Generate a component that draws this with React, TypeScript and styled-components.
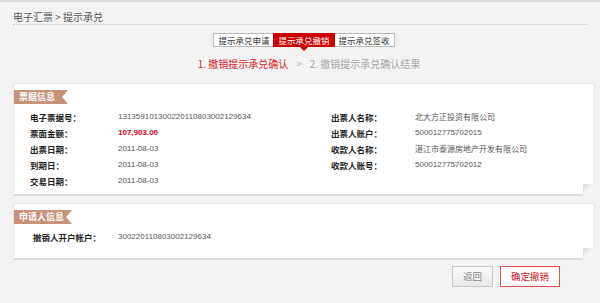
import React from "react";
import styled, { createGlobalStyle } from "styled-components";

const Global = createGlobalStyle`
  html, body { margin: 0; padding: 0; background: #f3f3f3; }
  body { font-family: "Liberation Sans", Arial, "Noto Sans CJK SC", sans-serif; color: #333; }
`;

const Page = styled.div`
  width: 600px;
  height: 303px;
  box-sizing: border-box;
  border-top: 2px solid #dcdcdc;
  padding: 0 5px 0 13px;
  background: #f3f3f3;
  overflow: hidden;
`;

const Breadcrumb = styled.div`
  height: 23px;
  box-sizing: border-box;
  padding-top: 9px;
  font-family: "Noto Sans CJK SC", sans-serif;
  font-size: 10px;
  line-height: 12px;
  color: #555;
  border-bottom: 1px dotted #c8c8c8;
  margin-right: 8px;
`;

const Tabs = styled.div`
  display: flex;
  justify-content: center;
  margin-top: 8px;
  padding-left: 1px;
`;

const Tab = styled.div<{ $active?: boolean }>`
  position: relative;
  height: 14px;
  box-sizing: border-box;
  padding: 0 4px;
  border: 1px solid ${(p) => (p.$active ? "#c80000" : "#b8b8b8")};
  margin-left: -1px;
  background: ${(p) => (p.$active ? "#cc0000" : "#fff")};
  color: ${(p) => (p.$active ? "#fff" : "#333")};
  font-family: "Noto Sans CJK SC", sans-serif;
  font-size: 8.5px;
  line-height: 12px;
  white-space: nowrap;
  z-index: ${(p) => (p.$active ? 1 : 0)};
  &::after {
    content: "";
    display: ${(p) => (p.$active ? "block" : "none")};
    position: absolute;
    left: 50%;
    bottom: -5px;
    margin-left: -4px;
    border-left: 4px solid transparent;
    border-right: 4px solid transparent;
    border-top: 4px solid #cc0000;
  }
`;

const Steps = styled.div`
  display: flex;
  justify-content: center;
  align-items: center;
  gap: 8px;
  margin-top: 10px;
  height: 14px;
  font-family: "Noto Sans CJK SC", sans-serif;
  font-size: 10px;
  line-height: 14px;
  padding-left: 10px;
`;

const Step = styled.span<{ $current?: boolean }>`
  color: ${(p) => (p.$current ? "#d9262a" : "#a8a8a8")};
`;

const Arrow = styled.span`
  color: #b0b0b0;
  font-family: "Liberation Sans", sans-serif;
  font-size: 9px;
`;

const Card = styled.div<{ $mt: number; $h: number }>`
  position: relative;
  margin-top: ${(p) => p.$mt}px;
  height: ${(p) => p.$h}px;
  box-sizing: border-box;
  background: #fff;
  border: 1px solid #e6e6e6;
  border-bottom: 2px solid #dcdcdc;
  padding-top: 6px;
  &::after {
    content: "";
    position: absolute;
    right: -1px;
    bottom: -2px;
    width: 12px;
    height: 12px;
    background: linear-gradient(135deg, #d8d8d8 0%, #f4f4f4 50%, #f3f3f3 50%, #f3f3f3 100%);
  }
`;

const Ribbon = styled.div<{ $w: number }>`
  width: ${(p) => p.$w}px;
  height: 14px;
  box-sizing: border-box;
  padding-left: 5px;
  background: #c7927a;
  color: #fff;
  font-family: "Noto Sans CJK SC", sans-serif;
  font-weight: bold;
  font-size: 9px;
  line-height: 14px;
  clip-path: polygon(0 0, 100% 0, calc(100% - 6px) 50%, 100% 100%, 0 100%);
`;

const InfoGrid = styled.div`
  display: grid;
  grid-template-columns: 301px 1fr;
  margin-top: 5px;
  padding-left: 16px;
`;

const Column = styled.div`
  display: flex;
  flex-direction: column;
`;

const Row = styled.div<{ $labelW: number }>`
  display: grid;
  grid-template-columns: ${(p) => p.$labelW}px 1fr;
  height: 16px;
  align-items: center;
  font-size: 8px;
  line-height: 16px;
`;

const Label = styled.span`
  font-family: "Noto Sans CJK SC", sans-serif;
  font-weight: bold;
  font-size: 8.5px;
  color: #222;
  white-space: nowrap;
`;

const Value = styled.span<{ $amount?: boolean; $cjk?: boolean }>`
  font-family: ${(p) => (p.$cjk ? `"Noto Sans CJK SC", sans-serif` : `"Liberation Sans", Arial, sans-serif`)};
  font-size: 8px;
  font-weight: ${(p) => (p.$amount ? "bold" : "normal")};
  color: ${(p) => (p.$amount ? "#d9001b" : "#555")};
  white-space: nowrap;
`;

const Single = styled.div`
  margin-top: 5px;
  padding-left: 19px;
`;

const Actions = styled.div`
  display: flex;
  justify-content: flex-end;
  gap: 7px;
  margin-top: 6px;
  padding-right: 35px;
`;

const Button = styled.button<{ $primary?: boolean }>`
  height: 21px;
  box-sizing: border-box;
  padding: 0;
  width: ${(p) => (p.$primary ? 60 : 41)}px;
  border: 1px solid ${(p) => (p.$primary ? "#d9534f" : "#c8c8c8")};
  background: ${(p) => (p.$primary ? "#fff" : "linear-gradient(#fafafa, #e8e8e8)")};
  color: ${(p) => (p.$primary ? "#c9161c" : "#888")};
  font-family: "Noto Sans CJK SC", sans-serif;
  font-size: 9.5px;
  line-height: 19px;
  cursor: pointer;
`;

type Item = [string, string, boolean?, boolean?];

const left: Item[] = [
  ["电子票据号：", "131359101300220110803002129634"],
  ["票面金额：", "107,903.00", true],
  ["出票日期：", "2011-08-03"],
  ["到期日：", "2011-08-03"],
  ["交易日期：", "2011-08-03"],
];

const right: Item[] = [
  ["出票人名称：", "北大方正投资有限公司", false, true],
  ["出票人账户：", "500012775702015"],
  ["收款人名称：", "湛江市泰源房地产开发有限公司", false, true],
  ["收款人账号：", "500012775702012"],
];

export default function App() {
  return (
    <Page>
      <Global />
      <Breadcrumb>电子汇票 &gt; 提示承兑</Breadcrumb>
      <Tabs>
        <Tab>提示承兑申请</Tab>
        <Tab $active>提示承兑撤销</Tab>
        <Tab>提示承兑签收</Tab>
      </Tabs>
      <Steps>
        <Step $current>1. 撤销提示承兑确认</Step>
        <Arrow>&gt;</Arrow>
        <Step>2. 撤销提示承兑确认结果</Step>
      </Steps>
      <Card $mt={12} $h={113}>
        <Ribbon $w={54}>票据信息</Ribbon>
        <InfoGrid>
          <Column>
            {left.map(([l, v, a, c]) => (
              <Row key={l} $labelW={88}>
                <Label>{l}</Label>
                <Value $amount={a} $cjk={c}>{v}</Value>
              </Row>
            ))}
          </Column>
          <Column>
            {right.map(([l, v, a, c]) => (
              <Row key={l} $labelW={84}>
                <Label>{l}</Label>
                <Value $amount={a} $cjk={c}>{v}</Value>
              </Row>
            ))}
          </Column>
        </InfoGrid>
      </Card>
      <Card $mt={7} $h={57}>
        <Ribbon $w={58}>申请人信息</Ribbon>
        <Single>
          <Row $labelW={85}>
            <Label>撤销人开户帐户：</Label>
            <Value>300220110803002129634</Value>
          </Row>
        </Single>
      </Card>
      <Actions>
        <Button>返回</Button>
        <Button $primary>确定撤销</Button>
      </Actions>
    </Page>
  );
}
